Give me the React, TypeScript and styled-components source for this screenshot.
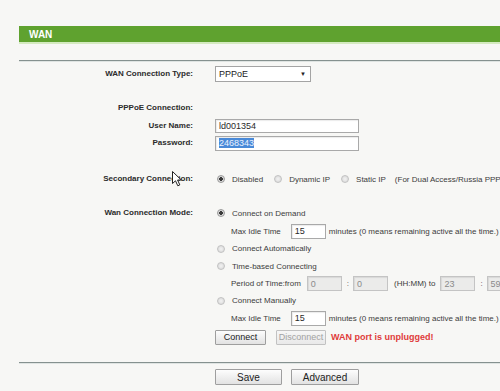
import React from "react";
import styled, { createGlobalStyle } from "styled-components";

const GlobalStyle = createGlobalStyle`
  html, body {
    margin: 0;
    padding: 0;
    background: #f7f7f5;
  }
  body {
    font-family: "Liberation Sans", Arial, sans-serif;
    overflow: hidden;
  }
`;

const Page = styled.div`
  position: relative;
  width: 500px;
  height: 391px;
  box-sizing: border-box;
  padding: 26px 0 0 19px;
  overflow: hidden;
  background: #f7f7f5;
`;

const TitleBar = styled.div`
  display: flex;
  align-items: center;
  height: 16px;
  padding-left: 10px;
  background: #5fa22f;
  box-shadow: 0 2px 0 #d4eac0;

  font-size: 10px;
  font-weight: 700;
  color: #ffffff;
`;

const Divider = styled.div<{ $mt: number }>`
  margin-top: ${(p) => p.$mt}px;
  border-top: 1px solid #85918f;
  border-bottom: 1px solid #dfe4e2;
`;

const FormRow = styled.div<{ $h?: number; $top?: boolean }>`
  display: grid;
  grid-template-columns: 174px 1fr;
  column-gap: 22px;
  align-items: ${(p) => (p.$top ? "start" : "center")};
  height: ${(p) => (p.$h ? `${p.$h}px` : "auto")};
`;

const Spacer = styled.div<{ $h: number }>`
  height: ${(p) => p.$h}px;
`;

const Label = styled.div`
  position: relative;
  text-align: right;
  white-space: nowrap;
  font-size: 8px;
  line-height: 18px;
  font-weight: 700;
  color: #2b2b2b;
`;

const Column = styled.div`
  display: flex;
  flex-direction: column;
`;

const Line = styled.div<{ $h?: number; $indent?: number }>`
  display: flex;
  align-items: center;
  height: ${(p) => (p.$h ? `${p.$h}px` : "auto")};
  padding-left: ${(p) => p.$indent ?? 0}px;
  white-space: nowrap;
  font-size: 8px;
  color: #3c3c3c;
`;

const Text = styled.span<{ $ml?: number }>`
  margin-left: ${(p) => p.$ml ?? 0}px;
`;

const Sep = styled.span`
  margin: 0 4px 0 5px;
  color: #555;
`;

const SelectBox = styled.div`
  display: flex;
  align-items: center;
  justify-content: space-between;
  width: 96px;
  height: 16px;
  box-sizing: border-box;
  padding: 0 4px 0 3px;
  border: 1px solid #a4a4a4;
  background: #ffffff;
  font-size: 9px;
  color: #222;
`;

const Arrow = styled.span`
  font-size: 6px;
  color: #222;
`;

const TextBox = styled.div<{ $w: number; $h?: number; $ml?: number; $disabled?: boolean }>`
  display: flex;
  align-items: center;
  width: ${(p) => p.$w}px;
  height: ${(p) => p.$h ?? 15}px;
  margin-left: ${(p) => p.$ml ?? 0}px;
  box-sizing: border-box;
  padding-left: 3px;
  border: 1px solid ${(p) => (p.$disabled ? "#c4c4c4" : "#a9a9a9")};
  background: ${(p) => (p.$disabled ? "#ebebea" : "#ffffff")};
  box-shadow: inset 1px 1px 1px rgba(0, 0, 0, 0.08);
  font-size: 9px;
  color: ${(p) => (p.$disabled ? "#8a8a8a" : "#2a2a2a")};
`;

const Selected = styled.span`
  background: #4a8ad8;
  color: #eaf2ff;
`;

const Option = styled.label<{ $mr?: number }>`
  display: inline-flex;
  align-items: center;
  gap: 7px;
  margin-right: ${(p) => p.$mr ?? 0}px;
`;

const RadioDot = styled.span<{ $on?: boolean }>`
  display: inline-block;
  width: 8px;
  height: 8px;
  margin-left: 2px;
  box-sizing: border-box;
  border-radius: 50%;
  border: 1px solid ${(p) => (p.$on ? "#9a9a9a" : "#c2c2c2")};
  background: ${(p) =>
    p.$on
      ? "radial-gradient(circle, #3a3a3a 0 1.6px, #d8d8d8 2px)"
      : "radial-gradient(circle, #f2f2f2 0, #d6d6d6 100%)"};
`;

const Button = styled.button<{ $w: number; $h?: number; $fs?: number }>`
  width: ${(p) => p.$w}px;
  height: ${(p) => p.$h ?? 15}px;
  padding: 0;
  border: 1px solid #9e9e9e;
  border-radius: 1px;
  background: linear-gradient(#fdfdfd, #e2e2e2);
  font-family: "Liberation Sans", Arial, sans-serif;
  font-size: ${(p) => p.$fs ?? 9}px;
  color: #222;

  &:disabled {
    border-color: #c2c2c2;
    background: linear-gradient(#f6f6f6, #e9e9e9);
    color: #a2a2a2;
  }
`;

const ButtonGroup = styled.div<{ $gap: number }>`
  display: flex;
  align-items: center;
  gap: ${(p) => p.$gap}px;
`;

const Warning = styled.span`
  margin-left: 5px;
  font-size: 9px;
  font-weight: 700;
  color: #df3b3b;
`;

const BottomBar = styled.div`
  display: flex;
  gap: 9px;
  margin-top: 5px;
  padding-left: 196px;
`;

const Cursor = styled.svg`
  position: absolute;
  left: 172px;
  top: 171px;
`;

type RadioProps = { label: string; on?: boolean; mr?: number };

const Radio = ({ label, on, mr }: RadioProps) => (
  <Option $mr={mr}>
    <RadioDot $on={on} />
    <span>{label}</span>
  </Option>
);

const IdleLine = () => (
  <Line $h={18} $indent={16}>
    <Text>Max Idle Time</Text>
    <TextBox $w={35} $ml={10}>15</TextBox>
    <Text $ml={3}>minutes (0 means remaining active all the time.)</Text>
  </Line>
);

export default function App() {
  return (
    <Page>
      <GlobalStyle />
      <TitleBar>WAN</TitleBar>
      <Divider $mt={18} />

      <FormRow $h={24}>
        <Label>WAN Connection Type:</Label>
        <SelectBox>
          <span>PPPoE</span>
          <Arrow>▼</Arrow>
        </SelectBox>
      </FormRow>

      <Spacer $h={13} />

      <FormRow $h={18}>
        <Label>PPPoE Connection:</Label>
        <div />
      </FormRow>
      <FormRow $h={17}>
        <Label>User Name:</Label>
        <TextBox $w={144} $h={14}>ld001354</TextBox>
      </FormRow>
      <FormRow $h={18}>
        <Label>Password:</Label>
        <TextBox $w={144}>
          <Selected>2468343</Selected>
        </TextBox>
      </FormRow>

      <Spacer $h={18} />

      <FormRow $h={18}>
        <Label>Secondary Connection:</Label>
        <Line>
          <Radio label="Disabled" on mr={9} />
          <Radio label="Dynamic IP" mr={9} />
          <Radio label="Static IP" mr={9} />
          <Text>(For Dual Access/Russia PPPoE)</Text>
        </Line>
      </FormRow>

      <Spacer $h={16} />

      <FormRow $top>
        <Label>Wan Connection Mode:</Label>
        <Column>
          <Line $h={18}>
            <Radio label="Connect on Demand" on />
          </Line>
          <IdleLine />
          <Line $h={17}>
            <Radio label="Connect Automatically" />
          </Line>
          <Line $h={18}>
            <Radio label="Time-based Connecting" />
          </Line>
          <Line $h={17} $indent={16}>
            <Text>Period of Time:from</Text>
            <TextBox $w={35} $ml={6} $disabled>0</TextBox>
            <Sep>:</Sep>
            <TextBox $w={35} $disabled>0</TextBox>
            <Text $ml={6}>(HH:MM) to</Text>
            <TextBox $w={35} $ml={5} $disabled>23</TextBox>
            <Sep>:</Sep>
            <TextBox $w={35} $disabled>59</TextBox>
          </Line>
          <Line $h={17}>
            <Radio label="Connect Manually" />
          </Line>
          <IdleLine />
          <Line $h={20}>
            <ButtonGroup $gap={10}>
              <Button $w={51}>Connect</Button>
              <Button $w={50} disabled>
                Disconnect
              </Button>
            </ButtonGroup>
            <Warning>WAN port is unplugged!</Warning>
          </Line>
        </Column>
      </FormRow>

      <Divider $mt={15} />

      <BottomBar>
        <Button $w={67} $h={16} $fs={10}>
          Save
        </Button>
        <Button $w={68} $h={16} $fs={10}>
          Advanced
        </Button>
      </BottomBar>

      <Cursor width="11" height="16" viewBox="0 0 11 16">
        <path
          d="M0.5 0.5 L0.5 12.5 L3.5 9.8 L5.8 14.8 L7.8 13.9 L5.6 9 L9.3 9 Z"
          fill="#ffffff"
          stroke="#222"
          strokeWidth="1"
          strokeLinejoin="round"
        />
      </Cursor>
    </Page>
  );
}
